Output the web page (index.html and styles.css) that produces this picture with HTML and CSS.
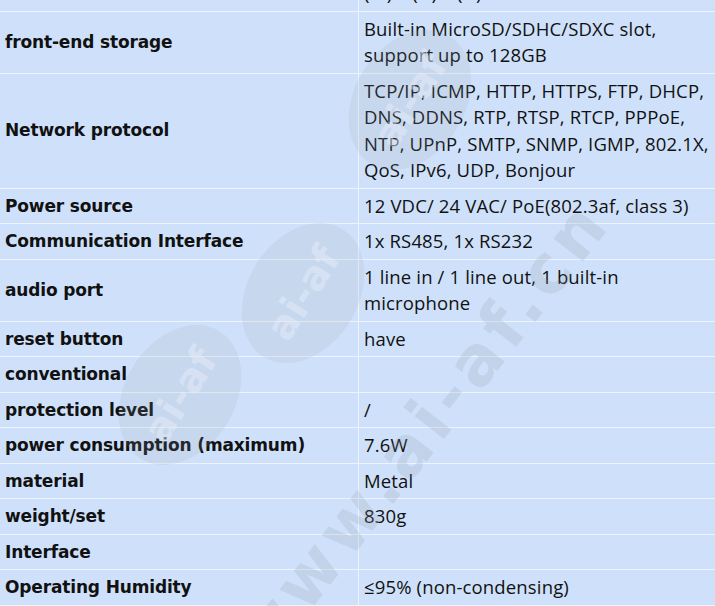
FILE: index.html
```html
<!DOCTYPE html>
<html>
<head>
<meta charset="utf-8">
<link rel="stylesheet" href="styles.css">
</head>
<body>
<div class="page">
  <table class="spec">
    <tr><td class="k">dimensions</td><td class="v">(W) x (H) x (D)</td></tr>
    <tr><td class="k">front-end storage</td><td class="v">Built-in MicroSD/SDHC/SDXC slot,<br>support up to 128GB</td></tr>
    <tr><td class="k">Network protocol</td><td class="v">TCP/IP, ICMP, HTTP, HTTPS, FTP, DHCP,<br>DNS, DDNS, RTP, RTSP, RTCP, PPPoE,<br>NTP, UPnP, SMTP, SNMP, IGMP, 802.1X,<br>QoS, IPv6, UDP, Bonjour</td></tr>
    <tr><td class="k">Power source</td><td class="v">12 VDC/ 24 VAC/ PoE(802.3af, class 3)</td></tr>
    <tr><td class="k">Communication Interface</td><td class="v">1x RS485, 1x RS232</td></tr>
    <tr><td class="k">audio port</td><td class="v">1 line in / 1 line out, 1 built-in<br>microphone</td></tr>
    <tr><td class="k">reset button</td><td class="v">have</td></tr>
    <tr><td class="k">conventional</td><td class="v"></td></tr>
    <tr><td class="k">protection level</td><td class="v">/</td></tr>
    <tr><td class="k">power consumption (maximum)</td><td class="v">7.6W</td></tr>
    <tr><td class="k">material</td><td class="v">Metal</td></tr>
    <tr><td class="k">weight/set</td><td class="v">830g</td></tr>
    <tr><td class="k">Interface</td><td class="v"></td></tr>
    <tr><td class="k">Operating Humidity</td><td class="v">≤95% (non-condensing)</td></tr>
  </table>
  <div class="wm wm-badge wm-b1"><span>ai-af</span></div>
  <div class="wm wm-badge wm-b2"><span>ai-af</span></div>
  <div class="wm wm-badge wm-b3"><span>ai-af</span></div>
  <div class="wm wm-url">www.ai-af.cn</div>
</div>
</body>
</html>
```
FILE: styles.css
```css
html, body {
  margin: 0;
  padding: 0;
  background: #cfe1fa;
}
.page {
  position: relative;
  width: 715px;
  height: 606px;
  overflow: hidden;
  background: #cfe1fa;
}
.spec {
  border-collapse: collapse;
  width: 900px;
  margin-top: -25px;
  margin-left: -1px;
  background: #cfe1fa;
}
.spec td {
  border: 1px solid #eef4fd;
  padding: 4px 5px 4px 5px;
  line-height: 26.5px;
  vertical-align: middle;
  color: #111;
}
.k {
  width: 348px;
  font-family: "DejaVu Sans", sans-serif;
  font-weight: bold;
  font-size: 17px;
  letter-spacing: -0.15px;
}
.v {
  font-family: "Open Sans", sans-serif;
  font-size: 18.5px;
  letter-spacing: 0.15px;
}
.wm {
  position: absolute;
  pointer-events: none;
  color: rgba(140, 150, 165, 0.2);
}
.wm-badge {
  width: 150px;
  height: 110px;
  border-radius: 50%;
  background: rgba(150, 160, 175, 0.15);
  display: flex;
  align-items: center;
  justify-content: center;
  transform: rotate(-58deg);
}
.wm-badge span {
  font-family: "DejaVu Sans", sans-serif;
  font-weight: bold;
  font-size: 40px;
  color: rgba(235, 242, 252, 0.45);
}
.wm-b1 { left: 228px; top: 238px; }
.wm-b2 { left: 105px; top: 340px; }
.wm-b3 { left: 335px; top: 45px; }
.wm-url {
  font-family: "DejaVu Sans", sans-serif;
  font-weight: bold;
  font-size: 68px;
  letter-spacing: 6px;
  white-space: nowrap;
  transform: rotate(-52deg);
  transform-origin: 0 0;
  top: 630px;
  left: 215px;
}
```
